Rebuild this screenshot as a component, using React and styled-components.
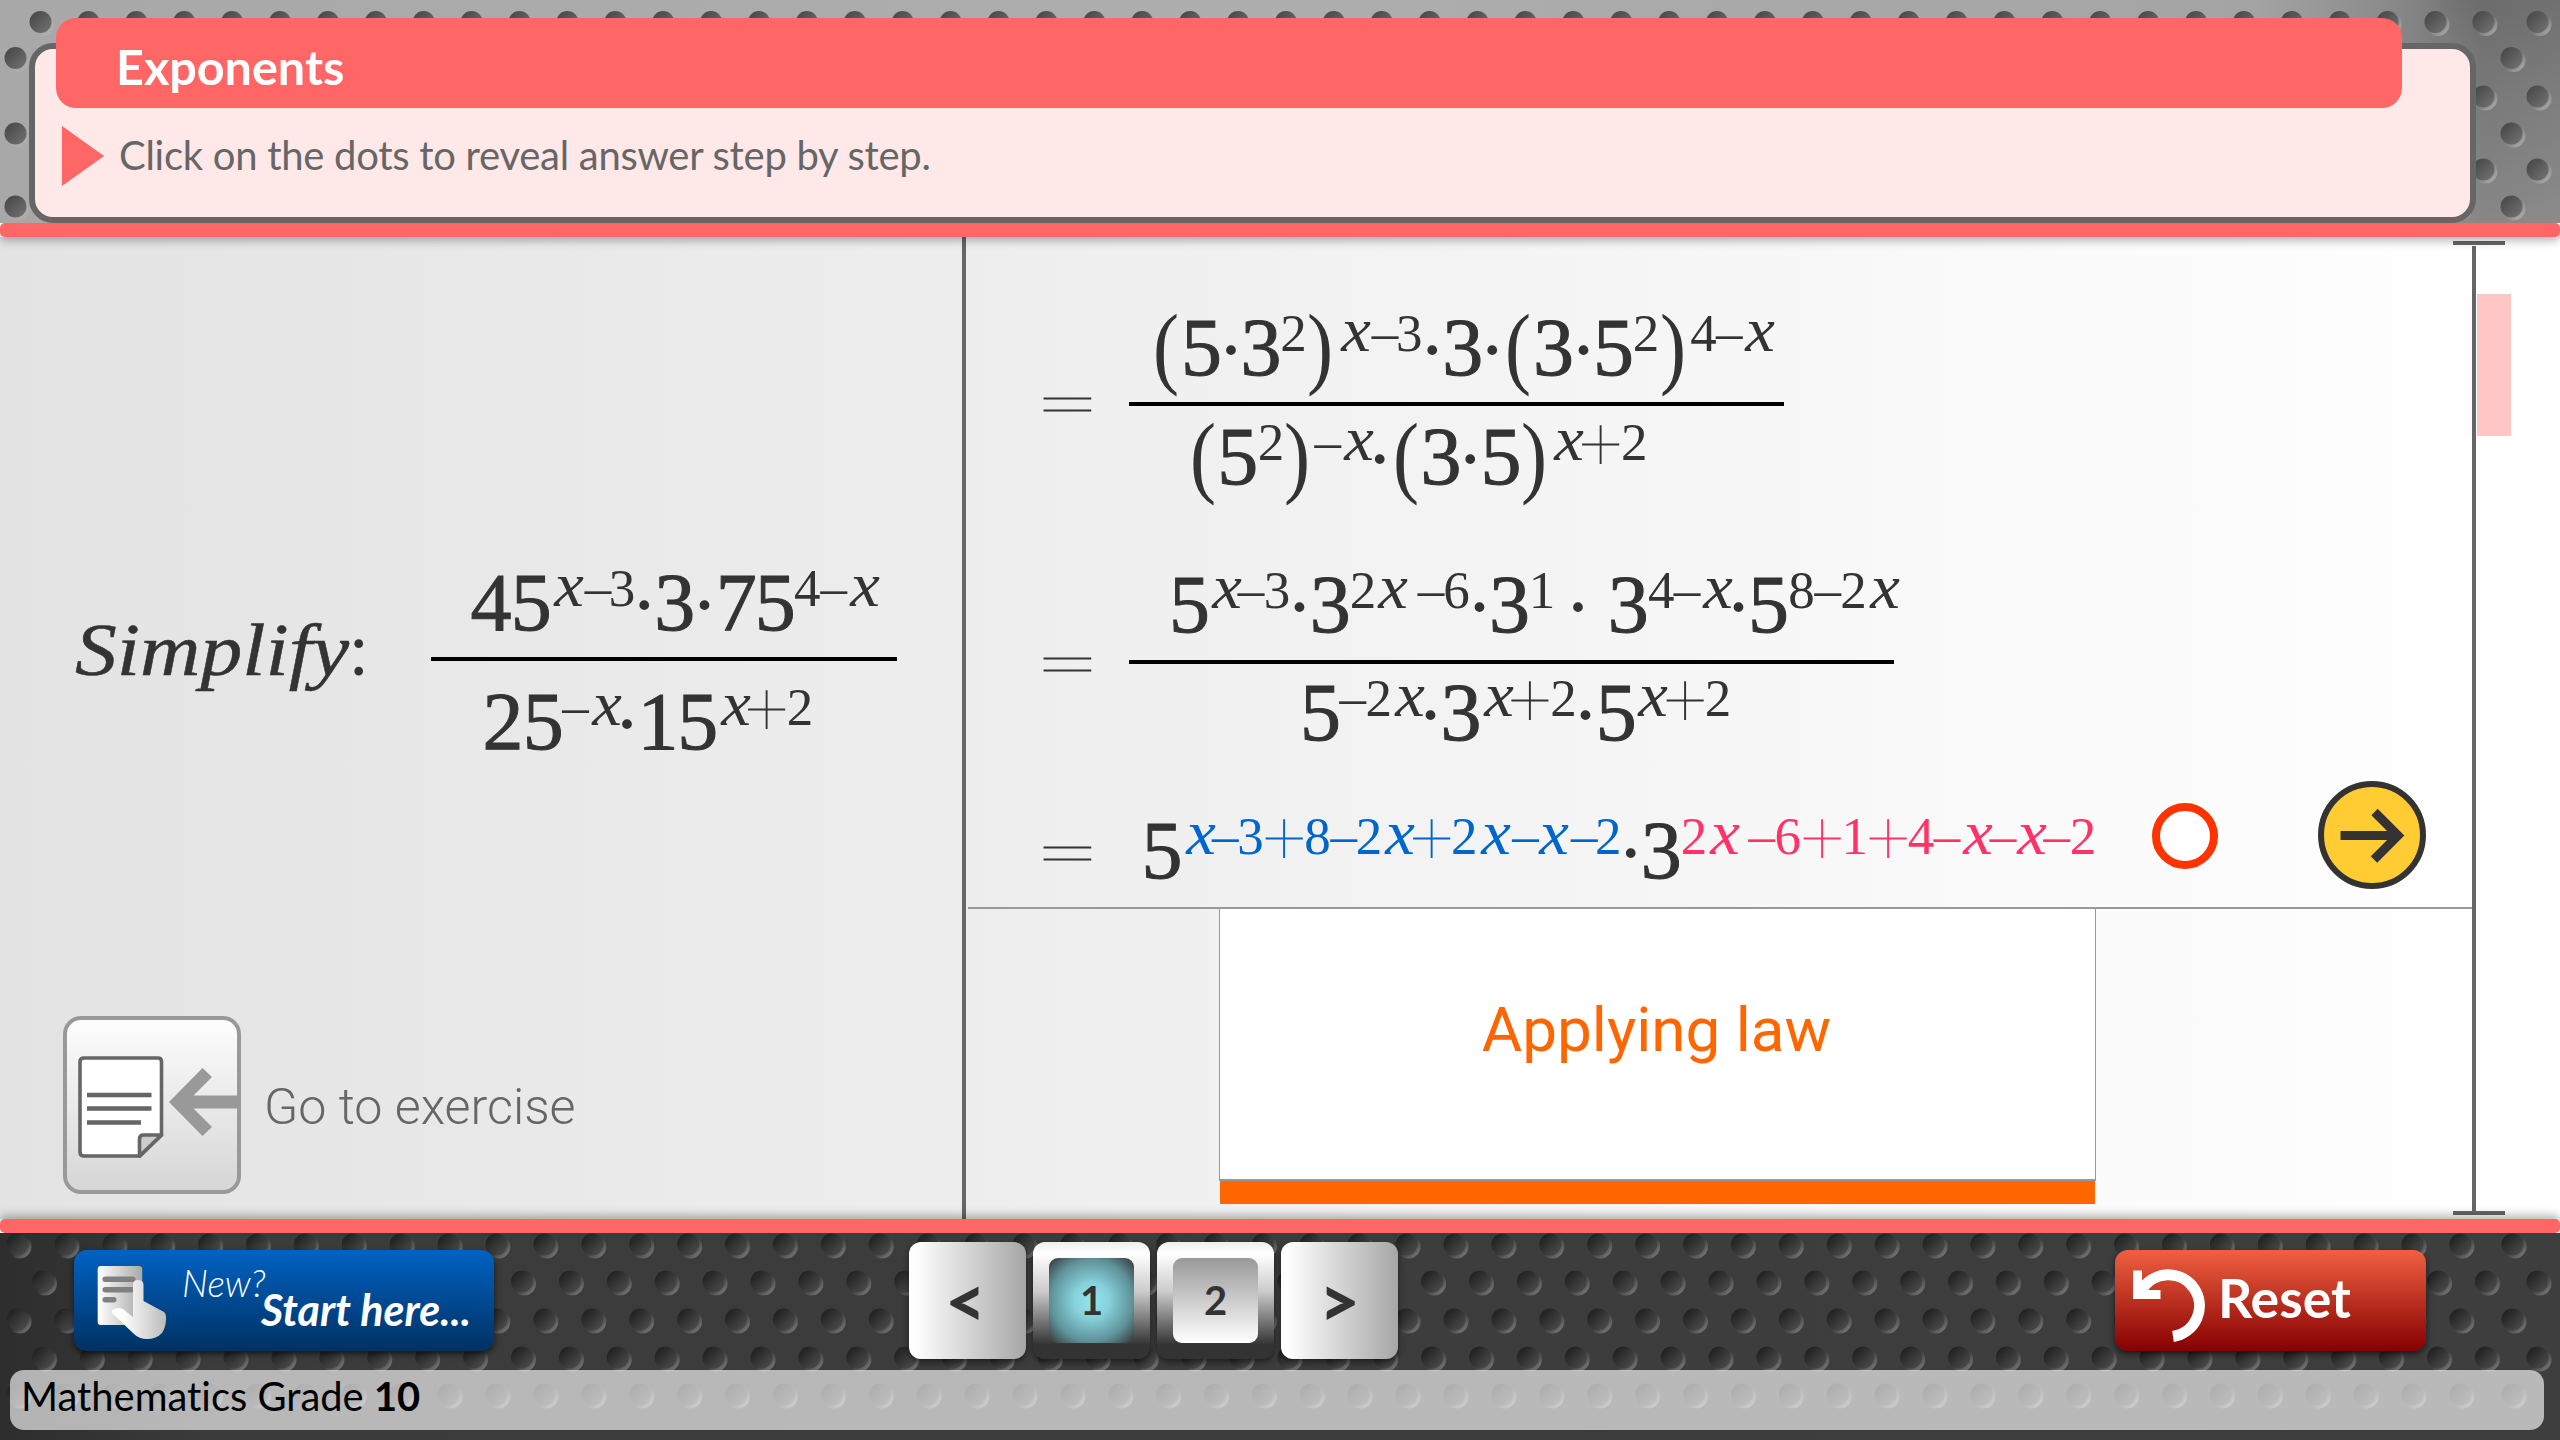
import React from "react";
import styled, { createGlobalStyle } from "styled-components";

const Global = createGlobalStyle`
  * { box-sizing: border-box; }
  body { margin: 0; background: #fff; font-variant-ligatures: none; }
`;

const coral = "#ff6666";
const ui = `Lato, "Liberation Sans", sans-serif`;

const Page = styled.div`
  width: 2560px;
  height: 1440px;
  display: flex;
  flex-direction: column;
  overflow: hidden;
  font-family: ${ui};
`;

const Texture = styled.svg`
  position: absolute;
  left: 0;
  top: 0;
  z-index: 0;
`;

/* ---------- header ---------- */
const Header = styled.header`
  position: relative;
  height: 223px;
  padding: 18px 84px 0 29px;
  background:
    linear-gradient(180deg, rgba(0, 0, 0, 0.04), rgba(255, 255, 255, 0.08) 50%, rgba(255, 255, 255, 0.16)) 2440px 0 / 120px 100% no-repeat,
    linear-gradient(90deg, #a8a8a8 0%, #aeaeae 50%, #a4a4a4 88%, #8c8c8c 93%, #707070 97%, #757575 100%);
`;

const Panel = styled.div`
  position: relative;
  z-index: 1;
  margin-top: 25px;
  width: 2447px;
  height: 180px;
  border: 6px solid #666;
  border-radius: 24px;
  background: #ffe8e8;
`;

const TitleTab = styled.h1`
  margin: -31px 0 0 21px;
  width: 2346px;
  height: 90px;
  padding-left: 60px;
  border-radius: 20px;
  background: ${coral};
  color: #fff;
  font-size: 48.5px;
  font-weight: 700;
  line-height: 97px;
`;

const Instruction = styled.p`
  margin: 18px 0 0 27px;
  display: flex;
  align-items: center;
  gap: 15px;
  height: 60px;
  color: #666;
  font-size: 40px;
  letter-spacing: -0.28px;
  line-height: 57px;
`;

const InstructionText = styled.span`
  margin-top: -2px;
`;

const Pointer = styled.span`
  width: 42px;
  height: 60px;
  background: ${coral};
  clip-path: polygon(0 0, 100% 50%, 0 100%);
`;

const Strip = styled.div`
  position: relative;
  z-index: 2;
  flex: none;
  height: 14px;
  border-radius: 5px;
  background: ${coral};
  box-shadow: 0 ${(p) => (p.$up ? -4 : 4)}px 8px rgba(0, 0, 0, 0.28);
  clip-path: ${(p) => (p.$up ? "inset(-14px 0 0 0)" : "inset(0 0 -14px 0)")};
`;

/* ---------- main area ---------- */
const Main = styled.main`
  height: 982px;
  display: flex;
  background: linear-gradient(90deg, #e3e3e3 0%, #eeeeee 39%, #fbfbfb 82%, #fff 100%);
`;

const Question = styled.section`
  width: 962px;
  padding: 315px 0 0 63px;
`;

const Problem = styled.div`
  display: flex;
  height: 464px;
`;

const Lead = styled.div`
  width: 368px;
  padding-left: 12px;
  margin-top: 48px;
  height: 100px;
  white-space: nowrap;
  color: #333;
  font: 74px/100px "Liberation Serif", serif;
`;

const LeadWord = styled.em`
  display: inline-block;
  transform-origin: 0 50%;
  transform: scaleX(1.13);
  margin-right: 31px;
  -webkit-text-stroke: 0.5px;
`;

const Exercise = styled.div`
  display: flex;
  align-items: center;
  gap: 23px;
  color: #666;
  font: 300 50.2px/60px Roboto, sans-serif;
`;

const ExerciseButton = styled.button`
  width: 178px;
  height: 178px;
  padding: 0;
  border: 4px solid #999;
  border-radius: 18px;
  background: linear-gradient(#fdfdfd, #d6d6d6);
  svg { display: block; }
`;

const ExerciseLabel = styled.span`
  padding-top: 4px;
`;

const Divider = styled.div`
  width: 4px;
  background: #666;
`;

const Work = styled.section`
  width: 1506px;
  padding-left: 2px;
`;

const Steps = styled.div`
  height: 672px;
  padding: 60px 0 0 76px;
  border-bottom: 2px solid #999;
`;

const Step = styled.div`
  display: flex;
  height: ${(p) => p.$h}px;
`;

const Equals = styled.span`
  width: 47px;
  height: 60px;
  margin: ${(p) => p.$top}px 38px 0 0;
  display: flex;
  justify-content: center;
  color: #333;
  font: 200 116px/60px Lato, sans-serif;
  -webkit-text-stroke: 1.3px #333;
  span { display: block; transform: scaleY(0.72); }
`;

const FractionBox = styled.div`
  width: ${(p) => p.$w}px;
  margin-top: ${(p) => p.$top || 0}px;
`;

const Bar = styled.div`
  height: 4px;
  margin: ${(p) => p.$m};
  background: #000;
`;

const Line = styled.div`
  height: 100px;
  padding: 1px 0 0 0.5px;
  white-space: nowrap;
  color: #333;
  font: 82px/100px "Liberation Serif", serif;
`;

const kinds = {
  n: { w: 41, css: "font-size: 82px; -webkit-text-stroke: 1px;" },
  s: { w: 26, css: "font-size: 53px; vertical-align: 24.5px;" },
  x: { w: 28, css: "font-size: 63px; font-style: italic; vertical-align: 24px; transform: scaleX(1.06);" },
  m: { w: 26, css: "font-size: 53px; vertical-align: 25px;" },
  p: { w: 34, css: "font-family: Lato; font-weight: 200; font-size: 78px; vertical-align: 13px; -webkit-text-stroke: 1.1px;" },
  d: { w: 14, css: "font-size: 60px; font-weight: 700; vertical-align: 5px;" },
  b: { w: 30, css: "font-size: 92px; vertical-align: -1.5px; transform: translateX(-1px) scaleX(0.85);" },
};

const Glyph = styled.span`
  display: inline-flex;
  justify-content: center;
  line-height: 0;
  width: ${(p) => kinds[p.$kind].w}px;
  margin-left: ${(p) => p.$kern}px;
  color: ${(p) => p.$tone || "inherit"};
  ${(p) => kinds[p.$kind].css}
`;

/* Each glyph is "kind char centre"; kerning is derived from neighbouring centres. */
function Formula({ text, start, tones = {} }) {
  let end = start;
  return (
    <Line>
      {text.split(" ").map((t, i) => {
        const kind = t[0];
        const char = t[1];
        const centre = parseFloat(t.slice(2));
        const left = centre - kinds[kind].w / 2;
        const kern = left - end;
        end = left + kinds[kind].w;
        const raised = "sxmp".includes(kind);
        const tone = raised ? (centre < tones.split ? tones.first : tones.second) : undefined;
        return (
          <Glyph key={i} $kind={kind} $kern={kern} $tone={tone}>
            {char}
          </Glyph>
        );
      })}
    </Line>
  );
}

function Fraction({ top, bottom, start, width, barMargin }) {
  return (
    <FractionBox $w={width}>
      <Formula text={top} start={start} />
      <Bar $m={barMargin} />
      <Formula text={bottom} start={start} />
    </FractionBox>
  );
}

const Dot = styled.button`
  width: 66px;
  height: 66px;
  padding: 0;
  margin: 23px 0 0 50.5px;
  border: 8px solid #ff3300;
  border-radius: 50%;
  background: #fff;
`;

const NextStep = styled.button`
  width: 108px;
  height: 108px;
  padding: 0;
  margin: 1px 0 0 100px;
  border: 6px solid #333;
  border-radius: 50%;
  background: #ffcc33;
  svg { display: block; }
`;

const LawBox = styled.div`
  width: 877px;
  margin-left: 251px;
`;

const Law = styled.div`
  height: 272px;
  padding-right: 2px;
  border: 1.5px solid #999;
  border-top: 0;
  border-bottom-width: 2px;
  background: #fff;
  color: #ff6600;
  text-align: center;
  font: 400 62px/242px Roboto, sans-serif;
`;

const LawBase = styled.div`
  height: 23px;
  margin: 0 1px;
  background: #ff6600;
`;

const Rail = styled.aside`
  width: 88px;
  padding-top: 4px;
  display: flex;
  flex-direction: column;
`;

const RailCap = styled.div`
  width: 52px;
  height: 4px;
  margin-left: -19px;
  background: #666;
`;

const RailTrack = styled.div`
  height: 965px;
  margin-top: 1px;
  border-left: 4px solid #666;
  padding: 48px 0 0 1px;
`;

const Thumb = styled.div`
  width: 34px;
  height: 142px;
  background: #ffc6c6;
`;

/* ---------- footer ---------- */
const Footer = styled.footer`
  position: relative;
  height: 207px;
  background: linear-gradient(90deg, #2d2d2d 0%, #3b3b3b 8%, #3e3e3e 100%);
`;

const Controls = styled.div`
  position: relative;
  z-index: 1;
  height: 137px;
  display: flex;
  padding: 9px 134px 0 74px;
`;

const StartButton = styled.button`
  width: 420px;
  height: 101px;
  margin-top: 8px;
  padding: 0 0 0 23px;
  display: flex;
  border: 0;
  border-radius: 13px;
  background: linear-gradient(#0062c4, #003162);
  box-shadow: 0 3px 6px rgba(0, 0, 0, 0.6);
  color: #fff;
  font-family: ${ui};
  font-style: italic;
  text-align: left;
`;

const StartNew = styled.span`
  margin: 9px 0 0 14px;
  width: 79px;
  font-size: 37px;
  font-weight: 300;
  line-height: 48px;
`;

const StartHere = styled.span`
  margin-top: 35px;
  font-size: 43px;
  font-weight: 700;
  line-height: 50px;
`;

const Pager = styled.nav`
  margin-left: 415px;
  display: flex;
  gap: 7px;
`;

const PagerKey = styled.button`
  width: 117px;
  height: 117px;
  padding: 0 ${(p) => p.$trim || 0}px 0 0;
  border: 0;
  border-radius: 12px;
  background: linear-gradient(90deg, #fff 5%, #a6a6a6);
  box-shadow: 0 3px 6px rgba(0, 0, 0, 0.5);
  color: #333;
  font: 900 70px/117px ${ui};
`;

const PageKey = styled(PagerKey)`
  padding: 16px;
  background: linear-gradient(#eee 0%, #fff 10%, #ccc 42%, #333 88%);
`;

const PageFace = styled.span`
  display: block;
  width: 85px;
  height: 85px;
  border-radius: 9px;
  background: ${(p) =>
    p.$active
      ? "radial-gradient(circle, #93e6f3 0%, #86d0da 30%, #5f9299 68%, #333 100%)"
      : "linear-gradient(#999, #fff)"};
  font: 700 40px/85px ${ui};
`;

const ResetButton = styled.button`
  margin: 8px 0 0 auto;
  width: 311px;
  height: 101px;
  padding: 0 0 0 17px;
  display: flex;
  border: 0;
  border-radius: 13px;
  background: linear-gradient(#f06040, #860000);
  box-shadow: 0 3px 6px rgba(0, 0, 0, 0.6);
  color: #fff;
  font: 700 53.5px/95px ${ui};
`;

const ResetLabel = styled.span`
  margin-left: 13px;
`;

const Caption = styled.div`
  position: relative;
  z-index: 1;
  margin-left: 10px;
  width: 2534px;
  height: 60px;
  padding-left: 11px;
  border-radius: 14px;
  background: rgba(255, 255, 255, 0.64);
  color: #000;
  font-size: 39.9px;
  line-height: 52px;
`;

function Plate({ width, height, rows, id, holes }) {
  const pitch = 47.9;
  const spots = [];
  rows.forEach(({ x, y, last }) => {
    for (let k = 0; k < 52; k++) spots.push([x + k * pitch, y]);
    if (last) spots.push([last, y]);
  });
  return (
    <Texture width={width} height={height} aria-hidden="true">
      <defs>
        <linearGradient id={id} x1="0" y1="0" x2="1" y2="1">
          <stop offset="0.1" stopColor={holes[0]} />
          <stop offset="1" stopColor={holes[1]} />
        </linearGradient>
        <linearGradient id={id + "r"} x1="0" y1="0" x2="1" y2="1">
          <stop offset="0.5" stopColor={holes[2]} stopOpacity="0" />
          <stop offset="0.95" stopColor={holes[2]} />
        </linearGradient>
      </defs>
      {spots.map(([x, y], i) => (
        <g key={i}>
          <circle cx={x + 1.5} cy={y + 1.5} r="12" fill={`url(#${id}r)`} />
          <circle cx={x - 0.5} cy={y - 0.5} r="11" fill={`url(#${id})`} />
        </g>
      ))}
    </Texture>
  );
}

export default function App() {
  return (
    <Page>
      <Global />
      <Header>
        <Plate
          id="steel"
          width={2560}
          height={223}
          holes={["#484848", "#747474", "#b0b0b0"]}
          rows={[
            { x: 41, y: 22.5, last: 2538 },
            { x: 16, y: 58.5, last: 2512 },
            { x: 41, y: 97, last: 2538 },
            { x: 16, y: 134, last: 2512 },
            { x: 41, y: 170, last: 2538 },
            { x: 16, y: 207, last: 2512 },
          ]}
        />
        <Panel>
          <TitleTab>Exponents</TitleTab>
          <Instruction>
            <Pointer />
            <InstructionText>Click on the dots to reveal answer step by step.</InstructionText>
          </Instruction>
        </Panel>
      </Header>
      <Strip />
      <Main>
        <Question>
          <Problem>
            <Lead>
              <LeadWord>Simplify</LeadWord>:
            </Lead>
            <Fraction
              start={431}
              width={466}
              barMargin="5px 0 10px"
              top="n4490.6 n5530.8 xx568.6 m–597.4 s3621.4 d·643.8 n3674.3 d·704 n7735.7 n5774.7 s4806.8 m–833.3 xx864.2"
              bottom="n2502.6 n5542.8 m–575 xx606 d·626.6 n1657.6 n5697.2 xx735.1 p+766.1 s2799.4"
            />
          </Problem>
          <Exercise>
            <ExerciseButton aria-label="Exercise">
              <svg width="170" height="170" viewBox="67 1020 170 170">
                <path
                  d="M84 1058H158Q161.500 1058 161.500 1061.500V1135L140 1156H84Q80 1156 80 1152V1062Q80 1058 84 1058Z"
                  fill="#fff" stroke="#666" strokeWidth="3.600"
                />
                <path d="M139.500 1156V1139Q139.500 1135 143.500 1135H161.500Z" fill="#ccc" stroke="#666" strokeWidth="3.600" strokeLinejoin="round" />
                <path d="M87 1095H151.500M87 1108.500H151.500M87 1122.500H141" stroke="#666" strokeWidth="4.500" />
                <path d="M169 1102L202.500 1068L212 1077L193.500 1095.500H240V1108.500H193.500L212 1127L202.500 1136Z" fill="#999" />
              </svg>
            </ExerciseButton>
            <ExerciseLabel>Go to exercise</ExerciseLabel>
          </Exercise>
        </Question>
        <Divider />
        <Work>
          <Steps>
            <Step $h={257}>
              <Equals $top={74}><span>=</span></Equals>
              <Fraction
                start={1129}
                width={655}
                barMargin="5px 0 0"
                top="b(1166.6 n51200.9 d·1230.4 n31260.4 s21293 b)1320.4 xx1355.7 m–1384.6 s31408.8 d·1431.8 n31462.3 d·1491.8 b(1518.6 n31552.9 d·1582.9 n51612.9 s21645.5 b)1673.4 s41702.9 m–1728.6 xx1759.1"
                bottom="b(1203.6 n51237.3 s21270.5 b)1297.3 m–1327.3 xx1358.4 d·1379.3 b(1406.6 n31440.4 d·1469.8 n51500.4 b)1534.1 xx1568.9 p+1600 s21633.7"
              />
            </Step>
            <Step $h={226}>
              <Equals $top={77}><span>=</span></Equals>
              <Fraction
                start={1129}
                width={765}
                barMargin="6px 0 -2px"
                top="n51189.1 xx1226.6 m–1250.6 s31276.4 d·1298.9 n31329.7 s21362.4 xx1392.7 m–1430.5 s61455.9 d·1479 n31509 s11541.4 d·1577.6 n31627.7 s41660.7 m–1686.5 xx1717.6 d·1738 n51768 s81801 m–1827.3 s21853.1 xx1884.3"
                bottom="n51320.1 m–1352.2 s21378.3 xx1409.5 d·1430.1 n31460.4 xx1498.2 p+1529.4 s21563 d·1585.1 n51615.7 xx1652.9 p+1684.7 s21717.6"
              />
            </Step>
            <Step $h={109}>
              <Equals $top={40}><span>=</span></Equals>
              <FractionBox $w={972} $top={20}>
                <Formula
                  start={1129}
                  tones={{ split: 1650, first: "#0066cc", second: "#ff3366" }}
                  text="n51161.4 xx1200.7 m–1224.7 s31250.1 p+1283.6 s81317 m–1343.2 s21368.6 xx1399.9 p+1431.2 s21463.9 xx1495.1 m–1525 xx1554 m–1583.8 s21607.8 d·1630.4 n31660.9 s21693.6 xx1724.9 m–1761.2 s61787.4 p+1821.6 s11854.3 p+1887.7 s41920.5 m–1946.6 xx1977.2 m–2002.6 xx2031.7 m–2056.4 s22082.6"
                />
              </FractionBox>
              <Dot aria-label="Reveal" />
              <NextStep aria-label="Next">
                <svg width="96" height="96" viewBox="2323 787 96 96">
                  <path d="M2339.500 835.500H2396M2373.500 812L2397 835.500L2373 859.500" fill="none" stroke="#333" strokeWidth="9" />
                </svg>
              </NextStep>
            </Step>
          </Steps>
          <LawBox>
            <Law>Applying law</Law>
            <LawBase />
          </LawBox>
        </Work>
        <Rail>
          <RailCap />
          <RailTrack>
            <Thumb />
          </RailTrack>
          <RailCap />
        </Rail>
      </Main>
      <Strip $up />
      <Footer>
        <Plate
          id="rubber"
          width={2560}
          height={207}
          holes={["#1f1f1f", "#505050", "#808080"]}
          rows={[
            { x: 18, y: 12, last: 2513 },
            { x: 43.5, y: 49, last: 2538 },
            { x: 18, y: 87, last: 2513 },
            { x: 43.5, y: 125, last: 2538 },
            { x: 18, y: 162, last: 2513 },
          ]}
        />
        <Controls>
          <StartButton>
            <svg width="71" height="101" viewBox="97 1250 71 101">
              <defs>
                <linearGradient id="sheet" x1="0" x2="1" y1="0" y2="0">
                  <stop offset="0" stopColor="#fff" />
                  <stop offset="1" stopColor="#a8a8a8" />
                </linearGradient>
                <linearGradient id="hand" x1="0" x2="1" y1="0" y2="0">
                  <stop offset="0.2" stopColor="#fff" />
                  <stop offset="1" stopColor="#bbb" />
                </linearGradient>
              </defs>
              <rect x="97.700" y="1266" width="44.500" height="59" rx="3" fill="url(#sheet)" />
              <rect x="102.500" y="1276.500" width="33" height="5.500" rx="2.700" fill="#808080" />
              <rect x="102.500" y="1287" width="33" height="5.500" rx="2.700" fill="#808080" />
              <rect x="102.500" y="1297" width="14" height="5.500" rx="2.700" fill="#808080" />
              <path
                d="M133 1285Q133 1280 138 1280Q143.500 1280 143.500 1285V1301L164 1312Q166.500 1314 166 1320Q165 1339 147 1339Q139 1339 134 1334L112 1313Q111 1311 114 1309Q119 1307 123 1309L133 1317Z"
                fill="url(#hand)"
              />
            </svg>
            <StartNew>New?</StartNew>
            <StartHere>Start here...</StartHere>
          </StartButton>
          <Pager>
            <PagerKey $trim={4}>&lt;</PagerKey>
            <PageKey><PageFace $active>1</PageFace></PageKey>
            <PageKey><PageFace>2</PageFace></PageKey>
            <PagerKey>&gt;</PagerKey>
          </Pager>
          <ResetButton>
            <svg width="73" height="101" viewBox="2131 1250 73 101">
              <path d="M2140.500 1290.500A31 31 0 1 1 2172 1336.500" fill="none" stroke="#fff" strokeWidth="11" />
              <path d="M2136.500 1270.500V1294.500H2159.500" fill="none" stroke="#fff" strokeWidth="9" />
            </svg>
            <ResetLabel>Reset</ResetLabel>
          </ResetButton>
        </Controls>
        <Caption>
          Mathematics Grade <b>10</b>
        </Caption>
      </Footer>
    </Page>
  );
}
